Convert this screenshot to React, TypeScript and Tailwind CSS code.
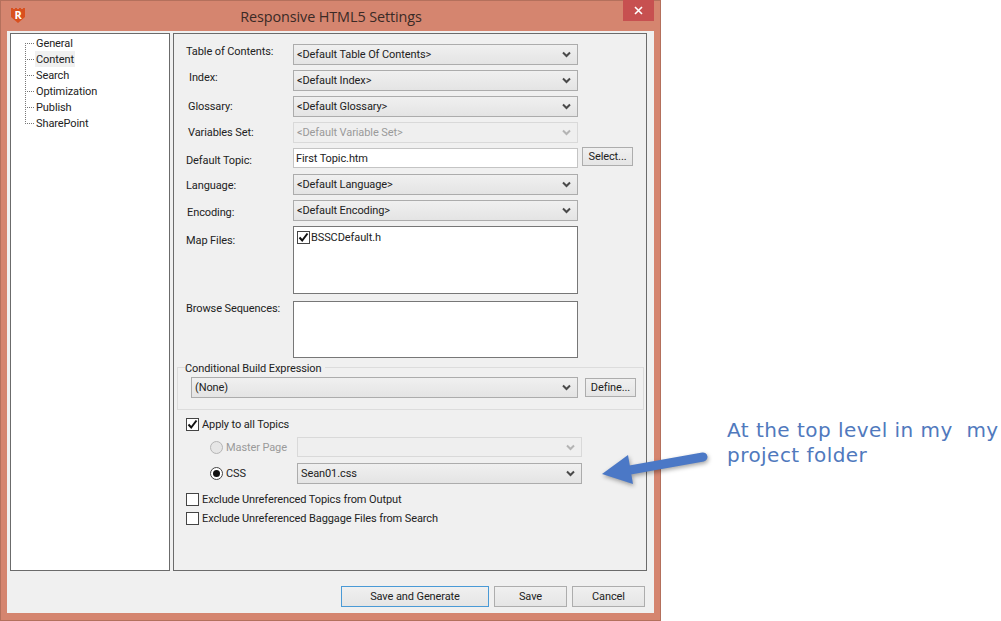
import React from "react";

const Chevron: React.FC<{ disabled?: boolean }> = ({ disabled }) => (
  <svg width="9" height="7" viewBox="0 0 9 7" className="shrink-0">
    <path d="M1 1.5 L4.5 5 L8 1.5" fill="none" stroke={disabled ? "#b4b4b4" : "#4a4a4a"} strokeWidth="2" />
  </svg>
);

const Combo: React.FC<{ text: string; disabled?: boolean; className?: string }> = ({ text, disabled, className }) => (
  <div
    className={`flex h-[21px] items-center justify-between border pl-[3px] pr-[6px] ${
      disabled
        ? "border-[#d9d9d9] bg-[#efefef] text-[#9a9a9a]"
        : "border-[#acacac] bg-gradient-to-b from-[#f0f0f0] to-[#e4e4e4] text-[#222]"
    } ${className ?? ""}`}
  >
    <span className="mt-[2px] whitespace-nowrap">{text}</span>
    <Chevron disabled={disabled} />
  </div>
);

const Check: React.FC<{ checked?: boolean }> = ({ checked }) => (
  <span className="flex h-[13px] w-[13px] shrink-0 items-center justify-center border border-[#444] bg-white">
    {checked && (
      <svg width="11" height="11" viewBox="0 0 11 11">
        <path d="M1.5 5.5 L4.2 8.5 L9.5 1.5" fill="none" stroke="#111" strokeWidth="2" />
      </svg>
    )}
  </span>
);

const Radio: React.FC<{ on?: boolean; disabled?: boolean }> = ({ on, disabled }) => (
  <span
    className={`flex h-[13px] w-[13px] shrink-0 items-center justify-center rounded-full border ${
      disabled ? "border-[#b5b5b5] bg-[#e6e6e6]" : "border-[#444] bg-white"
    }`}
  >
    {on && <span className="h-[7px] w-[7px] rounded-full bg-[#111]" />}
  </span>
);

const Btn: React.FC<{ text: string; className: string }> = ({ text, className }) => (
  <div className={`flex items-center justify-center border bg-gradient-to-b from-[#f0f0f0] to-[#e5e5e5] pt-[2px] text-[#222] ${className}`}>
    {text}
  </div>
);

const Row: React.FC<{ label: string; labelClass: string; rowClass: string; children: React.ReactNode }> = ({
  label,
  labelClass,
  rowClass,
  children,
}) => (
  <div className={`flex items-start ${rowClass}`}>
    <div className={`w-[119px] shrink-0 whitespace-nowrap leading-[16px] ${labelClass}`}>{label}</div>
    {children}
  </div>
);

const treeItems = ["General", "Content", "Search", "Optimization", "Publish", "SharePoint"];

export default function App() {
  return (
    <div className="relative flex h-[621px] w-[1001px] overflow-hidden bg-white font-['Roboto',sans-serif] text-[11px] tracking-[-0.1px] text-[#222]">
      {/* Dialog window */}
      <div className="flex h-[621px] w-[661px] shrink-0 flex-col border border-[#b4705c] bg-[#d5856f]">
        <div className="relative flex h-[30px] shrink-0 items-center justify-center pl-[1px] pt-[1px] font-['Open_Sans',sans-serif] text-[14.4px] tracking-[-0.1px] text-[#3a2a26]">
          <svg width="16" height="17" viewBox="0 0 16 17" className="absolute left-[9px] top-[6px]">
            <path d="M1 1h2v1h2V1h2v1h2V1h2v1h2V1h2v9l-7 6-7-6z" fill="#d9501e" />
            <text x="8" y="12" textAnchor="middle" fontSize="11" fontWeight="700" fill="#fff">R</text>
          </svg>
          Responsive HTML5 Settings
          <div className="absolute right-[6px] top-[-1px] flex h-[21px] w-[31px] items-center justify-center bg-[#c75050]">
            <svg width="9" height="9" viewBox="0 0 9 9">
              <path d="M1 1 L8 8 M8 1 L1 8" stroke="#fff" strokeWidth="1.6" />
            </svg>
          </div>
        </div>

        <div className="mx-[6px] mb-[7px] flex min-h-0 flex-1 flex-col bg-[#f0f0f0] pt-[2px]">
          <div className="flex h-[538px] gap-[3px] pl-[3px]">
            {/* Tree */}
            <div className="w-[160px] border border-[#6b6b6b] bg-white pl-[14px] pt-[1px]">
              <div className="ml-0 mt-[8px] h-[81px] w-0 border-l border-dotted border-[#777]" />
              <div className="-mt-[89px]">
                {treeItems.map((t) => (
                  <div key={t} className="flex h-[16px] items-center leading-[16px]">
                    <span className="w-[9px] border-t border-dotted border-[#777]" />
                    <span className={`ml-[1px] h-[16px] px-[1px] pt-[1px] ${t === "Content" ? "bg-[#f0f0f0]" : ""}`}>{t}</span>
                  </div>
                ))}
              </div>
            </div>

            {/* Settings panel */}
            <div className="w-[474px] border border-[#6b6b6b] pt-[10px]">
              <Row label="Table of Contents:" labelClass="pl-[12px]" rowClass="mb-[5px]">
                <Combo text="<Default Table Of Contents>" className="w-[285px]" />
              </Row>
              <Row label="Index:" labelClass="pl-[15px]" rowClass="mb-[5px]">
                <Combo text="<Default Index>" className="w-[285px]" />
              </Row>
              <Row label="Glossary:" labelClass="pl-[14px] mt-[3px]" rowClass="mb-[5px]">
                <Combo text="<Default Glossary>" className="w-[285px]" />
              </Row>
              <Row label="Variables Set:" labelClass="pl-[14px] mt-[3px]" rowClass="mb-[5px]">
                <Combo text="<Default Variable Set>" disabled className="w-[285px]" />
              </Row>
              <Row label="Default Topic:" labelClass="pl-[12px] mt-[5px]" rowClass="mb-[6px] h-[20px]">
                <div className="flex h-[20px] w-[285px] items-center border border-[#c4c4c4] bg-white pl-[2px] pt-[2px]">First Topic.htm</div>
                <Btn text="Select..." className="ml-[4px] mt-[-1px] h-[19px] w-[51px] border-[#adadad]" />
              </Row>
              <Row label="Language:" labelClass="pl-[12px] mt-[4px]" rowClass="mb-[5px] h-[21px]">
                <Combo text="<Default Language>" className="w-[285px]" />
              </Row>
              <Row label="Encoding:" labelClass="pl-[13px] mt-[5px]" rowClass="mb-[5px] h-[21px]">
                <Combo text="<Default Encoding>" className="w-[285px]" />
              </Row>
              <Row label="Map Files:" labelClass="pl-[12px] mt-[7px]" rowClass="mb-[7px]">
                <div className="flex h-[68px] w-[285px] items-start gap-[1px] border border-[#777] bg-white pl-[3px] pt-[4px]">
                  <Check checked />
                  <span className="leading-[13px]">BSSCDefault.h</span>
                </div>
              </Row>
              <Row label="Browse Sequences:" labelClass="pl-[12px]" rowClass="mb-[2px]">
                <div className="h-[57px] w-[285px] border border-[#777] bg-white" />
              </Row>

              <fieldset className="ml-[3px] h-[50px] w-[467px] border border-[#dcdcdc] pl-[10px] pr-[7px]">
                <legend className="ml-[-3px] translate-y-[2px] whitespace-nowrap bg-[#f0f0f0] pr-[3px] leading-[14px]">Conditional Build Expression</legend>
                <div className="ml-[3px] mt-[3px] flex items-start">
                  <Combo text="(None)" className="w-[387px]" />
                  <Btn text="Define..." className="ml-[7px] mt-[1px] h-[19px] w-[51px] border-[#adadad]" />
                </div>
              </fieldset>

              <div className="ml-[12px] mt-[8px] flex h-[13px] items-center gap-[3px]">
                <Check checked />
                <span className="mt-[2px]">Apply to all Topics</span>
              </div>
              <div className="ml-[36px] mt-[6px] flex h-[20px] items-center text-[#9a9a9a]">
                <Radio disabled />
                <span className="ml-[3px] mt-[2px] w-[71px]">Master Page</span>
                <div className="flex h-[20px] w-[285px] items-center justify-end border border-[#d9d9d9] bg-[#efefef] pr-[6px]">
                  <Chevron disabled />
                </div>
              </div>
              <div className="ml-[36px] mt-[6px] flex h-[21px] items-center">
                <Radio on />
                <span className="ml-[3px] mt-[2px] w-[71px]">CSS</span>
                <Combo text="Sean01.css" className="w-[285px]" />
              </div>
              <div className="ml-[12px] mt-[9px] flex h-[13px] items-center gap-[3px]">
                <Check />
                <span className="mt-[2px]">Exclude Unreferenced Topics from Output</span>
              </div>
              <div className="ml-[12px] mt-[6px] flex h-[13px] items-center gap-[3px]">
                <Check />
                <span className="mt-[2px]">Exclude Unreferenced Baggage Files from Search</span>
              </div>
            </div>
          </div>

          {/* Footer buttons */}
          <div className="mt-[15px] flex justify-end gap-[5px] pr-[9px]">
            <Btn text="Save and Generate" className="h-[21px] w-[148px] border-[#4a9ad6]" />
            <Btn text="Save" className="h-[21px] w-[73px] border-[#adadad]" />
            <Btn text="Cancel" className="h-[21px] w-[73px] border-[#adadad]" />
          </div>
        </div>
      </div>

      {/* Annotation */}
      <div className="ml-[66px] mt-[418px] whitespace-pre font-['DejaVu_Sans',sans-serif] text-[20px] leading-[25px] tracking-[0.46px] text-[#5079bd]">
        {"At the top level in my  my\nproject folder"}
      </div>

      <svg width="120" height="50" viewBox="0 0 120 50" className="absolute left-[595px] top-[445px] drop-shadow-[1px_2px_2px_rgba(0,0,0,0.35)]">
        <path d="M35 25 L108 12" stroke="#4b78c6" strokeWidth="9" strokeLinecap="round" fill="none" />
        <path d="M7 29 L33 10 L38 39 Z" fill="#4b78c6" />
      </svg>
    </div>
  );
}
